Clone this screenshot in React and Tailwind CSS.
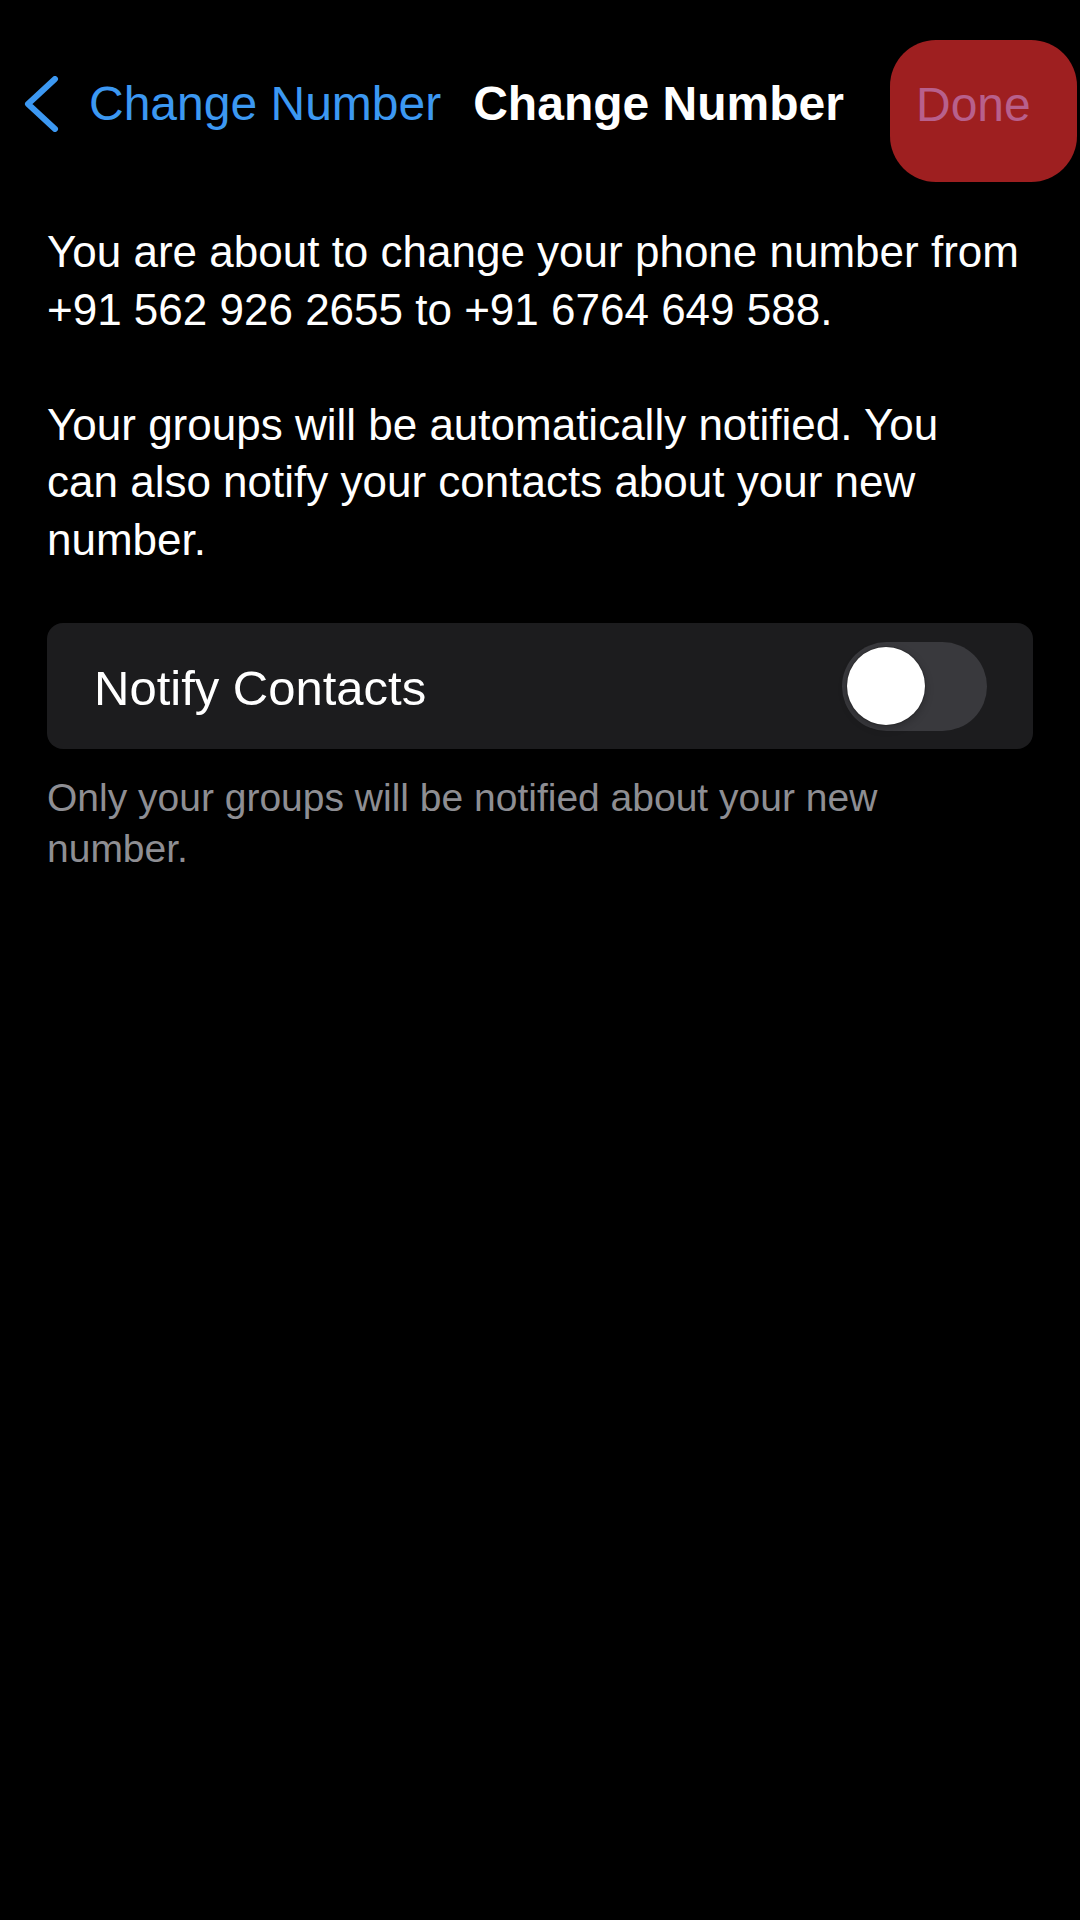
import React, { useState } from 'react';

export default function App() {
  const [notify, setNotify] = useState(false);

  return (
    <div className="min-h-[1920px] w-[1080px] bg-black pt-[40px] font-['Liberation_Sans',Arial,sans-serif] text-white">
      {/* Nav bar */}
      <div className="flex h-[142px] items-center">
        <div className="flex items-center pb-[14px]">
          <svg className="ml-[24px]" width="36" height="56" viewBox="0 0 36 56" fill="none">
            <path d="M31 3 L4 28 L31 53" stroke="#3c98f2" strokeWidth="6" strokeLinecap="round" strokeLinejoin="round" />
          </svg>
          <span className="ml-[29px] text-[48px] leading-none text-[#3c98f2] whitespace-nowrap">Change Number</span>
          <span className="ml-[32px] text-[48px] leading-none font-bold whitespace-nowrap">Change Number</span>
        </div>
        <button className="ml-auto mr-[3px] flex h-[142px] w-[187px] items-center rounded-[46px] bg-[#9e1f20] pl-[26px] pb-[12px]">
          <span className="text-[48px] leading-none text-[#b8608c]">Done</span>
        </button>
      </div>

      {/* Message */}
      <div className="mt-[41px] px-[47px] text-[44px] leading-[57.5px] whitespace-nowrap">
        <p>You are about to change your phone number from</p>
        <p>+91 562 926 2655 to +91 6764 649 588.</p>
        <p className="mt-[57.5px]">Your groups will be automatically notified. You</p>
        <p>can also notify your contacts about your new</p>
        <p>number.</p>
      </div>

      {/* Notify row */}
      <div className="mx-[47px] mt-[55px] flex h-[126px] items-center justify-between rounded-[16px] bg-[#1c1c1e] pl-[47px] pr-[46px]">
        <span className="pt-[4px] text-[49px] leading-[57px]">Notify Contacts</span>
        <button
          onClick={() => setNotify(!notify)}
          className={`flex h-[89px] w-[145px] items-center rounded-full px-[5px] ${notify ? 'justify-end bg-[#34c759]' : 'justify-start bg-[#39393d]'}`}
        >
          <span className="block h-[78px] w-[78px] rounded-full bg-white shadow-[0_0_0_1px_rgba(0,0,0,0.15),0_3px_8px_rgba(0,0,0,0.25)]"></span>
        </button>
      </div>

      <div className="mt-[23px] px-[47px] text-[39px] leading-[51px] text-[#8e8e93] whitespace-nowrap">
        <p>Only your groups will be notified about your new</p>
        <p>number.</p>
      </div>
    </div>
  );
}
